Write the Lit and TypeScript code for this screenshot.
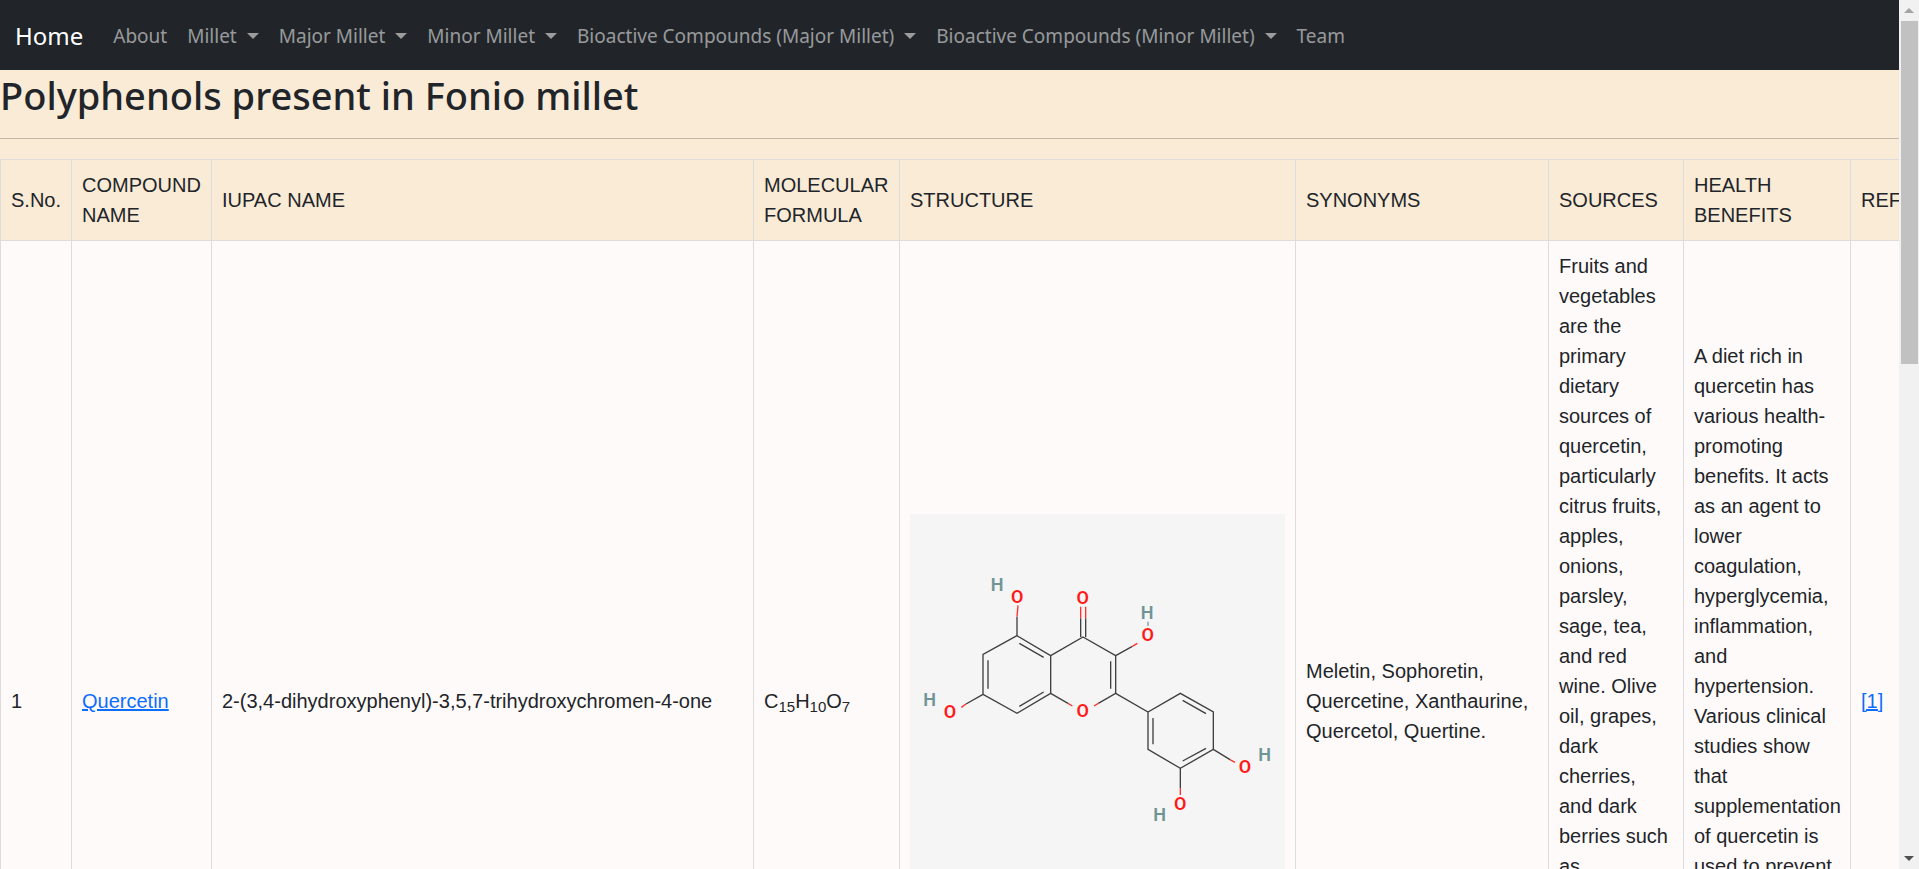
import { LitElement, html, svg, css } from 'lit';
import { customElement } from 'lit/decorators.js';

interface NavItem {
  label: string;
  menu: boolean;
}

const NAV: NavItem[] = [
  { label: 'About', menu: false },
  { label: 'Millet', menu: true },
  { label: 'Major Millet', menu: true },
  { label: 'Minor Millet', menu: true },
  { label: 'Bioactive Compounds (Major Millet)', menu: true },
  { label: 'Bioactive Compounds (Minor Millet)', menu: true },
  { label: 'Team', menu: false },
];

const COLUMNS = [
  { name: 'serial', title: 'S.No.' },
  { name: 'compound', title: 'COMPOUND NAME' },
  { name: 'iupac', title: 'IUPAC NAME' },
  { name: 'formula', title: 'MOLECULAR FORMULA' },
  { name: 'structure', title: 'STRUCTURE' },
  { name: 'synonyms', title: 'SYNONYMS' },
  { name: 'sources', title: 'SOURCES' },
  { name: 'benefits', title: 'HEALTH BENEFITS' },
  { name: 'references', title: 'REFERENCES' },
];

/* Two-dimensional structure of quercetin. */
@customElement('quercetin-structure')
class QuercetinStructure extends LitElement {
  static styles = css`
    :host {
      display: block;
    }
    svg {
      display: block;
      width: 100%;
      background: #f5f5f5;
    }
    .bond {
      fill: none;
      stroke: #3f3f3f;
      stroke-width: 4;
    }
    .oxygen-bond {
      fill: none;
      stroke: #ff3030;
      stroke-width: 4;
    }
    .hydrogen-bond {
      stroke: #7a9c9c;
      stroke-width: 4;
    }
    text {
      font: 600 54px Roboto, 'Liberation Sans', sans-serif;
      text-anchor: middle;
    }
    .oxygen {
      fill: #ff1a1a;
    }
    .hydrogen {
      fill: #6f9494;
    }
  `;

  private oxygens = [
    [352, 293], [548, 297], [743, 409], [150, 638], [548, 635], [1035, 803], [841, 916],
  ];

  private hydrogens = [
    [291, 259], [741, 342], [89, 604], [1094, 769], [779, 949],
  ];

  render() {
    return html`
      <svg viewBox="30 27 1125 1125" role="img" aria-label="Quercetin structure">
        <path class="bond" d="M351 392 L249 448 V568 L351 625 L452 565 V452 Z" />
        <path class="bond" d="M264 466 V551 M358 415 L431 457 M358 604 L431 561" />
        <path class="bond" d="M452 452 L549 396 L647 452 V565 L595 595 M452 565 L504 595 M632 469 V551" />
        <path class="bond" d="M351 392 V335 M542 396 V340 M557 396 V340 M647 452 L697 424 M249 568 L198 597" />
        <path class="bond" d="M647 565 L744 621 L841 565 L940 621 V733 L841 790 L744 733 V621" />
        <path class="bond" d="M759 639 V718 M848 586 L918 626 M848 768 L918 730 M940 733 L990 764 M841 790 V850" />
        <path class="oxygen-bond" d="M351 335 L354 301 M542 340 V305 M557 340 V305 M697 424 L712 415 M198 597 L184 607" />
        <path class="oxygen-bond" d="M504 595 L517 603 M595 595 L582 603 M990 764 L1005 772 M841 850 V870" />
        <path class="hydrogen-bond" d="M744 350 V363" />
        ${this.oxygens.map(([x, y]) => svg`<text class="oxygen" x=${x} y=${y}>O</text>`)}
        ${this.hydrogens.map(([x, y]) => svg`<text class="hydrogen" x=${x} y=${y}>H</text>`)}
      </svg>
    `;
  }
}

@customElement('app-root')
class AppRoot extends LitElement {
  static styles = css`
    :host {
      display: grid;
      grid-template-columns: minmax(0, 1fr) 20px;
      height: 100vh;
      background: antiquewhite;
      color: #212529;
      font: 20px/30px 'Liberation Sans', Arial, sans-serif;
    }
    .page {
      overflow: auto;
      scrollbar-width: none;
    }
    .navbar {
      display: flex;
      align-items: center;
      gap: 20px;
      padding: 11px 15px 9px;
      background: #212529;
      font: 19px/30px 'Noto Sans', sans-serif;
    }
    .brand {
      color: #fff;
      font-size: 24px;
      text-decoration: none;
    }
    .nav-list {
      display: flex;
      margin: 0;
      padding: 0;
      list-style: none;
    }
    .nav-link {
      display: flex;
      align-items: center;
      gap: 10px;
      padding: 10px;
      border: 0;
      background: none;
      color: rgba(255, 255, 255, 0.55);
      font: inherit;
      text-decoration: none;
      white-space: nowrap;
      cursor: pointer;
    }
    .caret {
      border: 6px solid transparent;
      border-top-color: currentColor;
      border-bottom: 0;
    }
    h1 {
      margin: 0;
      font: 500 38px/50px 'Noto Sans', sans-serif;
    }
    hr {
      height: 1px;
      margin: 18px 0 20px;
      border: 0;
      background: #212529;
      opacity: 0.25;
    }
    table {
      width: 100%;
      table-layout: fixed;
      border-collapse: collapse;
    }
    th,
    td {
      padding: 10px;
      border: 1px solid #dcdcdc;
      font-weight: 400;
      text-align: left;
      vertical-align: middle;
    }
    tbody {
      background: snow;
    }
    a {
      color: #0d6efd;
    }
    sub {
      font-size: 15px;
      line-height: 0;
      vertical-align: baseline;
      position: relative;
      bottom: -4px;
    }
    .serial {
      width: 71px;
    }
    .compound {
      width: 140px;
    }
    .iupac {
      width: 542px;
    }
    .formula {
      width: 146px;
    }
    .structure {
      width: 396px;
    }
    .synonyms {
      width: 253px;
    }
    .sources {
      width: 135px;
    }
    .benefits {
      width: 167px;
    }
    .references {
      width: 160px;
    }
    .scrollbar {
      display: flex;
      flex-direction: column;
      background: #f1f1f1;
    }
    .arrow {
      display: grid;
      place-items: center;
      height: 21px;
      padding: 0;
      border: 0;
      background: none;
      color: #505050;
    }
    .arrow svg {
      width: 10px;
      height: 5px;
      fill: currentColor;
    }
    .arrow.inactive {
      color: #a3a3a3;
    }
    .track {
      flex: 1;
      padding: 0 1px 0 2px;
    }
    .thumb {
      height: 41.5%;
      background: #c1c1c1;
    }
  `;

  private navItem(item: NavItem) {
    return html`
      <li>
        ${item.menu
          ? html`<button class="nav-link" type="button" aria-haspopup="true">
              ${item.label}<span class="caret"></span>
            </button>`
          : html`<a class="nav-link" href="#">${item.label}</a>`}
      </li>
    `;
  }

  render() {
    return html`
      <div class="page">
        <nav class="navbar">
          <a class="brand" href="#">Home</a>
          <ul class="nav-list">
            ${NAV.map((item) => this.navItem(item))}
          </ul>
        </nav>
        <main>
          <h1>Polyphenols present in Fonio millet</h1>
          <hr />
          <table>
            <colgroup>
              ${COLUMNS.map((column) => html`<col class=${column.name} />`)}
            </colgroup>
            <thead>
              <tr>
                ${COLUMNS.map((column) => html`<th scope="col">${column.title}</th>`)}
              </tr>
            </thead>
            <tbody>
              <tr>
                <td>1</td>
                <td><a href="#">Quercetin</a></td>
                <td>2-(3,4-dihydroxyphenyl)-3,5,7-trihydroxychromen-4-one</td>
                <td>C<sub>15</sub>H<sub>10</sub>O<sub>7</sub></td>
                <td><quercetin-structure></quercetin-structure></td>
                <td>Meletin, Sophoretin, Quercetine, Xanthaurine, Quercetol, Quertine.</td>
                <td>
                  Fruits and vegetables are the primary dietary sources of quercetin,
                  particularly citrus fruits, apples, onions, parsley, sage, tea, and red
                  wine. Olive oil, grapes, dark cherries, and dark berries such as
                  blueberries, blackberries, and bilberries are also high in quercetin
                  and other flavonoids.
                </td>
                <td>
                  A diet rich in quercetin has various health-promoting benefits. It acts
                  as an agent to lower coagulation, hyperglycemia, inflammation, and
                  hypertension. Various clinical studies show that supplementation of
                  quercetin is used to prevent and treat various chronic diseases such as
                  cardiovascular diseases.
                </td>
                <td><a href="#">[1]</a></td>
              </tr>
            </tbody>
          </table>
        </main>
      </div>
      <div class="scrollbar">
        <button class="arrow inactive" type="button" aria-label="Scroll up">
          <svg viewBox="0 0 10 5"><path d="M0 5 L5 0 L10 5 Z" /></svg>
        </button>
        <div class="track"><div class="thumb"></div></div>
        <button class="arrow" type="button" aria-label="Scroll down">
          <svg viewBox="0 0 10 5"><path d="M0 0 L5 5 L10 0 Z" /></svg>
        </button>
      </div>
    `;
  }
}
